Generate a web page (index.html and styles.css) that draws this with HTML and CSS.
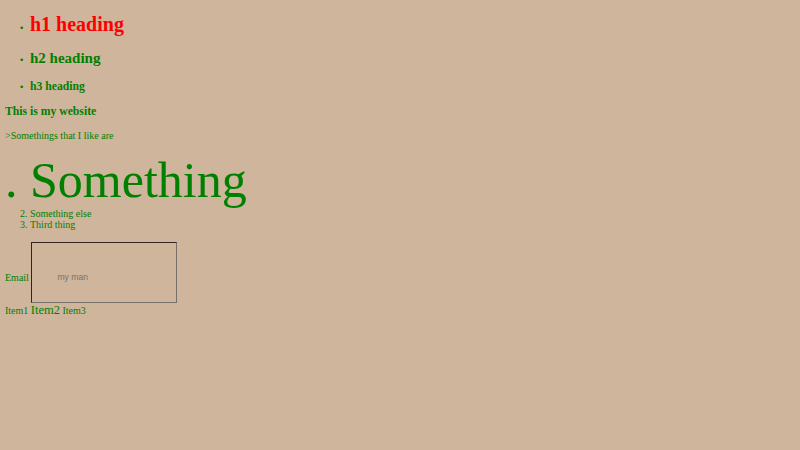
FILE: index.html
```html
<!DOCTYPE html>
<html>
<head>
<meta charset="utf-8">
<title>My website</title>
<link rel="stylesheet" href="styles.css">
</head>
<body>
<ul class="heads">
  <li><h1 class="red">h1 heading</h1></li>
  <li><h2>h2 heading</h2></li>
  <li><h3 class="last-head">h3 heading</h3></li>
</ul>
<h3>This is my website</h3>
<p>&gt;Somethings that I like are</p>
<ol class="likes">
  <li class="big">Something</li>
  <li>Something else</li>
  <li>Third thing</li>
</ol>
<form class="form">
  <label for="email">Email</label> <input id="email" class="field" type="text" placeholder="my man">
</form>
<div class="items"><span>Item1</span> <span class="item-big">Item2</span> <span>Item3</span></div>
</body>
</html>
```
FILE: styles.css
```css
html {
  background: #cfb59b;
}
body {
  margin: 0 5px 5px;
  font-family: "Liberation Serif", "Times New Roman", serif;
  font-size: 10px;
  color: #008000;
}
.heads {
  padding-left: 25px;
  margin: 10px 0;
}
.heads li::marker {
  content: "\2022\a0\a0";
  font-size: 9px;
  font-family: "DejaVu Sans", sans-serif;
}
.red {
  color: #ff0000;
}
h1 { font-size: 2em; margin: 0.67em 0; }
h2 { font-size: 1.5em; margin: 0.83em 0; }
h3 { font-size: 1.17em; margin: 1em 0; }
.last-head {
  margin-top: 13px;
  margin-bottom: 12.5px;
}
p { margin: 1em 0; }
.likes {
  padding-left: 25px;
  margin: 11px 0 11.5px;
}
.big {
  font-size: 50px;
  line-height: 56.5px;
}
.form {
  margin: 0;
}
.field {
  box-sizing: border-box;
  width: 146px;
  height: 61px;
  margin: 0;
  padding: 10px 0 0 25px;
  background: transparent;
  border-style: solid;
  border-width: 1.5px;
  border-color: #2e261e #77706a #77706a #2e261e;
  font-family: "Liberation Sans", Arial, sans-serif;
  font-size: 8.6px;
  color: #333;
  vertical-align: baseline;
}
.field::placeholder {
  color: #7a7268;
}
.items {
  margin: 0;
}
.item-big {
  font-size: 12.5px;
}
```
